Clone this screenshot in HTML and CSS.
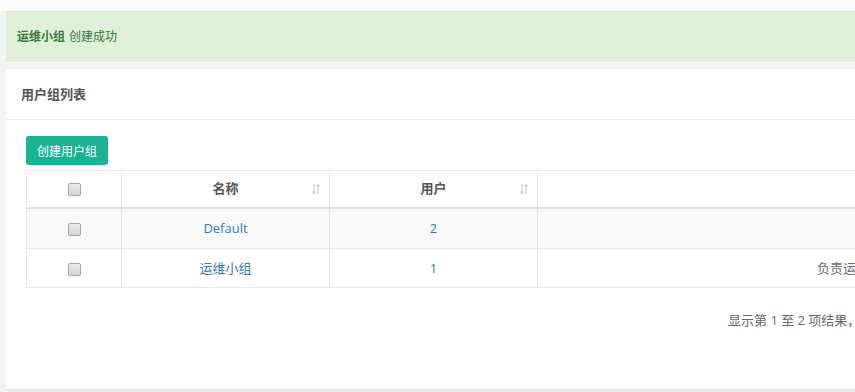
FILE: index.html
```html
<!DOCTYPE html>
<html lang="zh">
<head>
<meta charset="utf-8">
<link rel="stylesheet" href="styles.css">
</head>
<body>
<div class="topstrip"></div>
<div class="wrap">
  <div class="alert"><b>运维小组</b> 创建成功</div>
  <div class="panel">
    <div class="panel-head">用户组列表</div>
    <div class="panel-body">
      <button class="btn">创建用户组</button>
      <table class="grid">
        <colgroup>
          <col class="c1"><col class="c2"><col class="c3"><col class="c4">
        </colgroup>
        <thead>
          <tr>
            <th><input type="checkbox"></th>
            <th class="sort">名称<svg class="si" width="8" height="12" viewBox="0 0 8 12"><path d="M2 1v9M0.5 8.5L2 10.5 3.5 8.5M6 11V2M4.5 3.5L6 1.5 7.5 3.5" stroke="#d3d3d3" stroke-width="1.4" fill="none"/></svg></th>
            <th class="sort">用户<svg class="si" width="8" height="12" viewBox="0 0 8 12"><path d="M2 1v9M0.5 8.5L2 10.5 3.5 8.5M6 11V2M4.5 3.5L6 1.5 7.5 3.5" stroke="#d3d3d3" stroke-width="1.4" fill="none"/></svg></th>
            <th></th>
          </tr>
        </thead>
        <tbody>
          <tr class="odd">
            <td><input type="checkbox"></td>
            <td><a>Default</a></td>
            <td><a>2</a></td>
            <td></td>
          </tr>
          <tr>
            <td><input type="checkbox"></td>
            <td><a>运维小组</a></td>
            <td><a>1</a></td>
            <td class="desc">负责运维工作的小组</td>
          </tr>
        </tbody>
      </table>
      <div class="info">显示第 1 至 2 项结果，共 2 项</div>
    </div>
  </div>
</div>
</body>
</html>
```

FILE: styles.css
```css
html, body {
  margin: 0;
  padding: 0;
  width: 855px;
  height: 392px;
  overflow: hidden;
  background: #f3f3f4;
  font-family: "Open Sans", "Noto Sans CJK SC", sans-serif;
  font-size: 13px;
  color: #676a6c;
}
.topstrip {
  height: 11px;
  background: #fbfafb;
}
.wrap {
  padding-left: 6px;
  width: 1200px;
}
.alert {
  box-sizing: border-box;
  height: 50px;
  padding: 0 11px 0 11px;
  display: flex;
  align-items: center;
  background: #dff0d8;
  border-top: 1px solid #d3e6cb;
  border-bottom: 1px solid #d6e9c6;
  color: #3c763d;
  font-size: 12px;
  margin-bottom: 9px;
}
.alert b {
  font-weight: 700;
  margin-right: 4px;
}
.panel {
  background: #fff;
  height: 319px;
  border-bottom: 2px solid #e7e7e7;
}
.panel-head {
  box-sizing: border-box;
  height: 50px;
  padding: 0 15px 3px;
  display: flex;
  align-items: center;
  border-bottom: 1px solid #e7eaec;
  font-size: 13px;
  font-weight: 600;
  color: #555;
}
.panel-body {
  padding: 16px 20px 0;
}
.btn {
  display: block;
  height: 29px;
  width: 82px;
  padding: 0;
  border: none;
  border-radius: 3px;
  background: #1ab394;
  color: #fff;
  font-family: "Noto Sans CJK SC", sans-serif;
  font-size: 12px;
  margin-bottom: 5px;
}
.grid {
  border-collapse: collapse;
  table-layout: fixed;
  width: 1187px;
  border: 1px solid #e7e7e7;
}
.c1 { width: 95px; }
.c2 { width: 208px; }
.c3 { width: 208px; }
.c4 { width: 676px; }
.grid th, .grid td {
  border: 1px solid #e7e7e7;
  text-align: center;
  padding: 0;
  font-family: "Open Sans", "Noto Sans CJK SC", sans-serif;
  font-size: 13px;
}
.grid th {
  height: 33px;
  padding-bottom: 3px;
  font-weight: 600;
  color: #555;
  border-bottom: 2px solid #e1e1e1;
  position: relative;
}
.grid td { padding-bottom: 1px; }
.grid tbody tr:first-child td { height: 38px; }
.grid tbody tr:last-child td { height: 37px; }
.grid tr.odd td { background: #f9f9f9; }
.grid a { color: #337ab7; }
.grid input {
  appearance: none;
  -webkit-appearance: none;
  box-sizing: border-box;
  margin: 0;
  width: 13px;
  height: 13px;
  vertical-align: middle;
  border: 1px solid #a6a6a6;
  border-radius: 2px;
  background: linear-gradient(#e9e9e9, #d4d4d4);
}
.si {
  position: absolute;
  right: 9px;
  top: 12px;
}
.desc { color: #676a6c; }
.info {
  margin-top: 22px;
  margin-left: 702px;
  font-size: 13px;
  color: #676a6c;
  white-space: nowrap;
}
```
